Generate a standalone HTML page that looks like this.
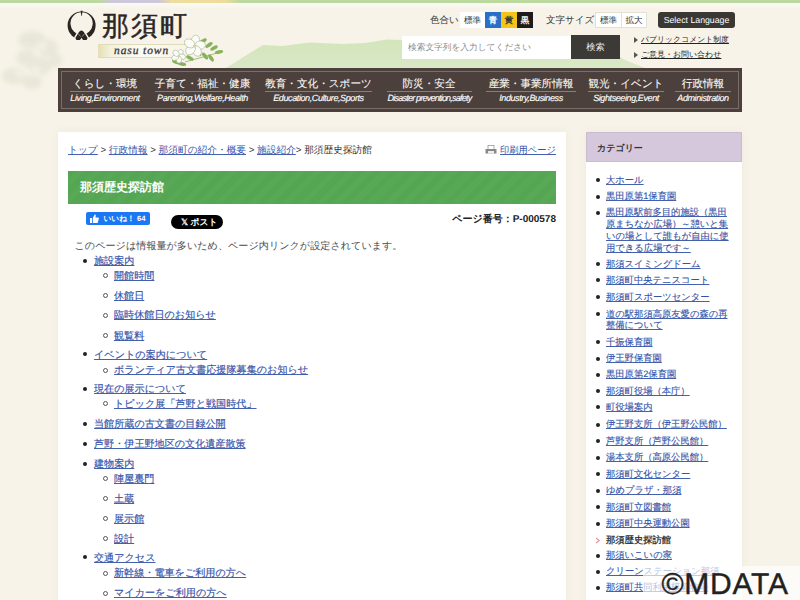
<!DOCTYPE html>
<html lang="ja"><head><meta charset="utf-8">
<style>
*{margin:0;padding:0;box-sizing:border-box}
html,body{width:800px;height:600px;overflow:hidden}
body{text-rendering:geometricPrecision;background:#f7f3e8;font-family:"Liberation Sans",sans-serif;color:#333;position:relative}
.a{position:absolute;white-space:nowrap}
a{color:#3452a8;text-decoration:underline;text-decoration-color:#4560ae}
#stripe{left:0;top:0;width:800px;height:3px;background:linear-gradient(90deg,#bcd9a0 0,#bcd9a0 98px,#cdc8dc 112px,#cdc8dc 158px,#eedd9e 172px,#efdc9c 225px,#bcd9a0 240px,#bcd9a0 800px)}
#stripe2{left:0;top:3px;width:800px;height:6px;background:linear-gradient(180deg,rgba(255,255,255,0.6),rgba(255,255,255,0))}
.btn{position:absolute;height:16px;font-size:8.5px;line-height:16px;text-align:center}
#nav{left:58px;top:68px;width:684px;height:44px;background:#4b403b}
#nav .in{position:absolute;left:3px;top:3px;right:3px;bottom:3px;border:1px solid #7a6f68}
.ni{position:absolute;top:0;height:44px;text-align:center;color:#f2efe8}
.ni .j{position:absolute;left:-10px;right:-10px;top:9.5px;font-size:10.6px;color:#fbf9f4;-webkit-text-stroke:0.1px #fbf9f4;line-height:13px;font-family:"Liberation Serif",serif}
.ni .u{position:absolute;top:23px;height:1px;background:#8a7f78;left:0;right:0}
.ni .e{position:absolute;left:-10px;right:-10px;top:25px;font-size:9px;line-height:10px;font-style:italic;letter-spacing:-0.4px;color:#fff;-webkit-text-stroke:0.15px #fff}
#main{left:58px;top:132px;width:508px;height:468px;background:#fff;box-shadow:0 0 9px rgba(90,90,60,0.06)}
#side{left:586px;top:132px;width:156px;height:468px;background:#fff;box-shadow:0 0 9px rgba(90,90,60,0.06)}
#sideh{left:586px;top:132px;width:156px;height:30px;background:#d5c7dc;border:1px solid #cbbcd1}
.t{position:absolute;white-space:nowrap;font-size:10.1px;line-height:15px;-webkit-text-stroke:0.15px #3452a8}
.dot{position:absolute;width:4px;height:4px;border-radius:50%;background:#222}
.cir{position:absolute;width:5px;height:5px;border-radius:50%;border:1px solid #555}
.s{position:absolute;white-space:nowrap;font-size:9.3px;line-height:11.8px;-webkit-text-stroke:0.12px #3452a8}
</style></head><body>
<div class="a" id="stripe"></div><div class="a" id="stripe2"></div>
<svg class="a" style="left:0;top:0" width="120" height="120" viewBox="0 0 120 120">
<defs><filter id="bl" x="-50%" y="-50%" width="200%" height="200%"><feGaussianBlur stdDeviation="2.5"/></filter></defs>
<g fill="#e6e4d6" filter="url(#bl)" opacity="0.8">
<ellipse cx="32" cy="40" rx="14" ry="9"/><ellipse cx="48" cy="48" rx="10" ry="9"/><ellipse cx="26" cy="58" rx="10" ry="8"/>
<ellipse cx="40" cy="66" rx="12" ry="9"/><ellipse cx="14" cy="76" rx="12" ry="8"/><ellipse cx="32" cy="82" rx="10" ry="7"/><ellipse cx="56" cy="60" rx="6" ry="7"/>
</g>
<g fill="#f8f7f0" filter="url(#bl)" opacity="0.7"><ellipse cx="42" cy="46" rx="5" ry="4"/><ellipse cx="20" cy="74" rx="5" ry="3"/><ellipse cx="36" cy="70" rx="4" ry="4"/></g>
</svg>
<svg class="a" style="left:0;top:0" width="800" height="70" viewBox="0 0 800 70">
<defs><linearGradient id="mg" x1="0" y1="0" x2="0" y2="1"><stop offset="0" stop-color="#d2e5ba"/><stop offset="1" stop-color="#d9e8c6"/></linearGradient></defs>
<path d="M226 68 L245 56 L263 45 L282 46 L310 42.5 L343 44 L365 43 L387 39.5 L402 40 L570 38 L600 45 L625 60 L645 68 Z" fill="url(#mg)"/>
</svg>
<svg class="a" style="left:64px;top:8px" width="36" height="36" viewBox="0 0 36 36">
<defs><mask id="lm"><rect width="36" height="36" fill="#fff"/><circle cx="17.6" cy="15.3" r="11.1" fill="#000"/><path d="M17.4 20.8 L22 24.6 L25.2 30 L25.2 36 L9.8 36 L9.8 30 L12.8 24.6 Z" fill="#000"/></mask></defs>
<circle cx="17.6" cy="17.5" r="14" fill="#2a2422" mask="url(#lm)"/>
<path d="M16.6 2.8 L18.6 2.8 L17.8 8 L17.4 8 Z" fill="#2a2422"/>
<path d="M17.4 22.6 C18.5 22.6 19.6 23.6 20.6 25.2 L23.6 30 L22.6 32 L19 32 L17.5 29.8 L16 32 L12.4 32 L11.4 30 L14.2 25.2 C15.2 23.6 16.3 22.6 17.4 22.6 Z" fill="#2a2422"/>
<path d="M14.2 25.6 L16.6 28.6 M20.6 25.6 L18.2 28.6" stroke="#e8e4d8" stroke-width="0.5"/>
</svg>
<div class="a" style="left:102px;top:10px;font-size:27px;line-height:32px;color:#2b2523;font-family:'Liberation Serif',serif;letter-spacing:2px;-webkit-text-stroke:0.5px #2b2523">那須町</div>
<div class="a" style="left:98px;top:44px;width:92px;height:14px;background:linear-gradient(90deg,#e4dfb5 0,#f3f0dc 12px,#fbfaf3 40px,#f8f6ea 80px,rgba(246,242,230,0) 92px);border-top:1px solid #e0dcb8;border-bottom:1px solid #e0dcb8"></div>
<div class="a" style="left:114px;top:44px;font-size:11.5px;line-height:14px;font-style:italic;font-family:'Liberation Serif',serif;color:#3a3836;letter-spacing:0.9px;-webkit-text-stroke:0.3px #3a3836">nasu town</div>
<svg class="a" style="left:0;top:0" width="240" height="70" viewBox="0 0 240 70">
<g fill="#86b35a"><ellipse cx="203" cy="41" rx="4.2" ry="1.8" transform="rotate(-30 203 41)"/><ellipse cx="209" cy="45" rx="4.2" ry="1.8" transform="rotate(-35 209 45)"/><ellipse cx="214" cy="48" rx="4.2" ry="1.8" transform="rotate(-30 214 48)"/><ellipse cx="219" cy="52" rx="4.2" ry="1.8" transform="rotate(-10 219 52)"/><ellipse cx="198" cy="53" rx="4.2" ry="1.8" transform="rotate(40 198 53)"/><ellipse cx="205" cy="56" rx="4.2" ry="1.8" transform="rotate(50 205 56)"/><ellipse cx="211" cy="58" rx="4.2" ry="1.8" transform="rotate(55 211 58)"/><ellipse cx="190" cy="58" rx="4.2" ry="1.8" transform="rotate(30 190 58)"/><ellipse cx="176" cy="62" rx="4.2" ry="1.8" transform="rotate(20 176 62)"/><ellipse cx="182" cy="64" rx="4.2" ry="1.8" transform="rotate(10 182 64)"/><path d="M185 62 L221 52" stroke="#86b35a" stroke-width="0.8"/></g>
<g fill="#fbfcf6" stroke="#9aa88c" stroke-width="0.5"><ellipse cx="195.46" cy="40.58" rx="5.50" ry="4.20" transform="rotate(-80.0 195.46 40.58)"/><ellipse cx="199.95" cy="45.23" rx="5.50" ry="4.20" transform="rotate(-8.0 199.95 45.23)"/><ellipse cx="196.91" cy="50.94" rx="5.50" ry="4.20" transform="rotate(64.0 196.91 50.94)"/><ellipse cx="190.54" cy="49.82" rx="5.50" ry="4.20" transform="rotate(136.0 190.54 49.82)"/><ellipse cx="189.64" cy="43.42" rx="5.50" ry="4.20" transform="rotate(208.0 189.64 43.42)"/></g>
<g fill="#fbfcf6" stroke="#9aa88c" stroke-width="0.5"><ellipse cx="180.29" cy="52.90" rx="3.58" ry="2.73" transform="rotate(-60.0 180.29 52.90)"/><ellipse cx="182.00" cy="56.74" rx="3.58" ry="2.73" transform="rotate(12.0 182.00 56.74)"/><ellipse cx="178.87" cy="59.56" rx="3.58" ry="2.73" transform="rotate(84.0 178.87 59.56)"/><ellipse cx="175.23" cy="57.45" rx="3.58" ry="2.73" transform="rotate(156.0 175.23 57.45)"/><ellipse cx="176.11" cy="53.34" rx="3.58" ry="2.73" transform="rotate(228.0 176.11 53.34)"/></g>
<circle cx="194.5" cy="46" r="1.6" fill="#cfd89a"/><circle cx="178.5" cy="56" r="1.1" fill="#cfd89a"/>
</svg>

<div class="a" style="left:430px;top:15px;font-size:9.5px;line-height:12px;color:#333">色合い</div>
<div class="btn" style="left:460px;top:12px;width:25px;background:#fff;color:#333">標準</div>
<div class="btn" style="left:485px;top:12px;width:16px;background:#2a6fc7;color:#fff;font-weight:bold">青</div>
<div class="btn" style="left:501px;top:12px;width:16px;background:#f4c418;color:#333;font-weight:bold">黄</div>
<div class="btn" style="left:517px;top:12px;width:16px;background:#1c1c1c;color:#fff;font-weight:bold">黒</div>
<div class="a" style="left:546px;top:15px;font-size:9.5px;line-height:12px;color:#333">文字サイズ</div>
<div class="btn" style="left:595px;top:12px;width:27px;background:#fff;color:#333;border:1px solid #e3e0d8;line-height:14px">標準</div>
<div class="btn" style="left:621px;top:12px;width:26px;background:#fff;color:#333;border:1px solid #e3e0d8;line-height:14px">拡大</div>
<div class="btn" style="left:658px;top:12px;width:77px;background:#3b3733;color:#fff;border-radius:3px;font-size:8.75px;line-height:17px">Select Language</div>

<div class="a" style="left:402px;top:36px;width:169px;height:23px;background:#fff"></div>
<div class="a" style="left:408px;top:41px;font-size:8.7px;line-height:12px;color:#8a8a8a">検索文字列を入力してください</div>
<div class="a" style="left:571px;top:35px;width:49px;height:24px;background:#3c3a37;color:#f4f4f4;font-size:9.2px;line-height:24px;text-align:center">検索</div>
<div class="a" style="left:634px;top:37px;width:0;height:0;border-left:4px solid #555;border-top:3px solid transparent;border-bottom:3px solid transparent"></div>
<div class="a" style="left:641px;top:34px;font-size:7.85px;line-height:11px;color:#222;text-decoration:underline">パブリックコメント制度</div>
<div class="a" style="left:634px;top:52px;width:0;height:0;border-left:4px solid #555;border-top:3px solid transparent;border-bottom:3px solid transparent"></div>
<div class="a" style="left:641px;top:49px;font-size:7.95px;line-height:11px;color:#222;text-decoration:underline">ご意見・お問い合わせ</div>

<div class="a" id="nav"><div class="in"></div>
<div class="ni" style="left:12px;width:70px"><div class="j">くらし・環境</div><div class="u"></div><div class="e">Living,Environment</div></div>
<div class="ni" style="left:97px;width:95px"><div class="j">子育て・福祉・健康</div><div class="u"></div><div class="e">Parenting,Welfare,Health</div></div>
<div class="ni" style="left:207px;width:107px"><div class="j">教育・文化・スポーツ</div><div class="u"></div><div class="e">Education,Culture,Sports</div></div>
<div class="ni" style="left:329px;width:85px"><div class="j" style="left:-11px">防災・安全</div><div class="u"></div><div class="e" style="letter-spacing:-0.78px">Disaster prevention,safety</div></div>
<div class="ni" style="left:428px;width:90px"><div class="j">産業・事業所情報</div><div class="u"></div><div class="e">Industry,Business</div></div>
<div class="ni" style="left:530px;width:76px"><div class="j">観光・イベント</div><div class="u"></div><div class="e">Sightseeing,Event</div></div>
<div class="ni" style="left:617px;width:56px"><div class="j">行政情報</div><div class="u"></div><div class="e">Administration</div></div>
</div>

<div class="a" id="main"></div>
<div class="a" id="side"></div>
<div class="a" id="sideh"></div>

<div class="a" style="left:68px;top:143.5px;font-size:9.7px;line-height:14px;color:#333"><a>トップ</a> &gt; <a>行政情報</a> &gt; <a>那須町の紹介・概要</a> &gt; <a>施設紹介</a>&gt; 那須歴史探訪館</div>
<svg class="a" style="left:485px;top:145px" width="12" height="9" viewBox="0 0 12 9"><rect x="3" y="0.5" width="6" height="4" fill="#fff" stroke="#999" stroke-width="0.8"/><rect x="0.5" y="4" width="11" height="4.5" fill="#888"/><rect x="3" y="6" width="6" height="2.5" fill="#eee"/></svg>
<div class="a" style="left:500px;top:143px;font-size:9.25px;line-height:14px"><a>印刷用ページ</a></div>
<div class="a" style="left:68px;top:171px;width:488px;height:33px;background:#55a653;background-image:repeating-linear-gradient(135deg,rgba(255,255,255,0) 0,rgba(255,255,255,0) 6px,rgba(255,255,255,0.025) 6px,rgba(255,255,255,0.025) 12px)"></div>
<div class="a" style="left:80px;top:180px;font-size:12px;line-height:14px;font-weight:bold;color:#fff">那須歴史探訪館</div>
<div class="a" style="left:86px;top:212px;width:64px;height:13px;background:#1b77f2;border-radius:2px"></div>
<svg class="a" style="left:90px;top:214px" width="9" height="9" viewBox="0 0 9 9"><path d="M0 4 H2 V9 H0 Z M2.8 4 L4.8 0.5 C5.6 0.5 6 1 5.8 2 L5.4 3.5 H8 C8.8 3.5 9 4.2 8.8 4.8 L7.8 8.5 C7.6 9 7.3 9 6.8 9 H2.8 Z" fill="#fff"/></svg>
<div class="a" style="left:103.5px;top:213px;font-size:7.7px;line-height:11px;color:#fff;font-weight:bold">いいね！ 64</div>
<div class="a" style="left:171px;top:215px;width:52px;height:14px;background:#000;border-radius:7px"></div>
<div class="a" style="left:181px;top:216px;font-size:8.8px;line-height:12px;color:#fff;font-weight:bold">𝕏 ポスト</div>
<div class="a" style="left:452px;top:213px;width:104px;text-align:right;font-size:10px;line-height:13px;font-weight:bold;color:#222">ページ番号：P-000578</div>
<div class="a" style="left:74.5px;top:238.5px;font-size:10.1px;line-height:15px;color:#4a4a4a">このページは情報量が多いため、ページ内リンクが設定されています。</div>
<div class="dot" style="left:83px;top:258.6px"></div><div class="t" style="left:94px;top:253.8px"><a>施設案内</a></div><div class="cir" style="left:102.5px;top:273.1px"></div><div class="t" style="left:114px;top:268.8px"><a>開館時間</a></div><div class="cir" style="left:102.5px;top:293.0px"></div><div class="t" style="left:114px;top:288.7px"><a>休館日</a></div><div class="cir" style="left:102.5px;top:312.5px"></div><div class="t" style="left:114px;top:308.2px"><a>臨時休館日のお知らせ</a></div><div class="cir" style="left:102.5px;top:333.1px"></div><div class="t" style="left:114px;top:328.8px"><a>観覧料</a></div><div class="dot" style="left:83px;top:352.4px"></div><div class="t" style="left:94px;top:347.6px"><a>イベントの案内について</a></div><div class="cir" style="left:102.5px;top:367.5px"></div><div class="t" style="left:114px;top:363.2px"><a>ボランティア古文書応援隊募集のお知らせ</a></div><div class="dot" style="left:83px;top:386.9px"></div><div class="t" style="left:94px;top:382.1px"><a>現在の展示について</a></div><div class="cir" style="left:102.5px;top:401.4px"></div><div class="t" style="left:114px;top:397.1px"><a>トピック展「芦野と戦国時代」</a></div><div class="dot" style="left:83px;top:422.2px"></div><div class="t" style="left:94px;top:417.4px"><a>当館所蔵の古文書の目録公開</a></div><div class="dot" style="left:83px;top:441.7px"></div><div class="t" style="left:94px;top:436.9px"><a>芦野・伊王野地区の文化遺産散策</a></div><div class="dot" style="left:83px;top:461.6px"></div><div class="t" style="left:94px;top:456.8px"><a>建物案内</a></div><div class="cir" style="left:102.5px;top:476.1px"></div><div class="t" style="left:114px;top:471.8px"><a>陣屋裏門</a></div><div class="cir" style="left:102.5px;top:496.4px"></div><div class="t" style="left:114px;top:492.1px"><a>土蔵</a></div><div class="cir" style="left:102.5px;top:516.2px"></div><div class="t" style="left:114px;top:511.9px"><a>展示館</a></div><div class="cir" style="left:102.5px;top:536.1px"></div><div class="t" style="left:114px;top:531.8px"><a>設計</a></div><div class="dot" style="left:83px;top:555.4px"></div><div class="t" style="left:94px;top:550.6px"><a>交通アクセス</a></div><div class="cir" style="left:102.5px;top:570.6px"></div><div class="t" style="left:114px;top:566.3px"><a>新幹線・電車をご利用の方へ</a></div><div class="cir" style="left:102.5px;top:590.5px"></div><div class="t" style="left:114px;top:586.2px"><a>マイカーをご利用の方へ</a></div>
<div class="a" style="left:597px;top:140.5px;font-size:9px;line-height:14px;font-weight:bold;color:#333">カテゴリー</div>
<div class="dot" style="left:596px;top:178.3px;width:4px;height:4px"></div><div class="s" style="left:606px;top:175.1px"><a>大ホール</a></div><div class="dot" style="left:596px;top:194.5px;width:4px;height:4px"></div><div class="s" style="left:606px;top:191.3px"><a>黒田原第1保育園</a></div><div class="dot" style="left:596px;top:210.5px;width:4px;height:4px"></div><div class="s" style="left:606px;top:207.3px"><a>黒田原駅前多目的施設（黒田<br>原まちなか広場）～憩いと集<br>いの場として誰もが自由に使<br>用できる広場です～</a></div><div class="dot" style="left:596px;top:262.2px;width:4px;height:4px"></div><div class="s" style="left:606px;top:259.0px"><a>那須スイミングドーム</a></div><div class="dot" style="left:596px;top:278.3px;width:4px;height:4px"></div><div class="s" style="left:606px;top:275.1px"><a>那須町中央テニスコート</a></div><div class="dot" style="left:596px;top:294.7px;width:4px;height:4px"></div><div class="s" style="left:606px;top:291.5px"><a>那須町スポーツセンター</a></div><div class="dot" style="left:596px;top:311.7px;width:4px;height:4px"></div><div class="s" style="left:606px;top:308.5px"><a>道の駅那須高原友愛の森の再<br>整備について</a></div><div class="dot" style="left:596px;top:340.0px;width:4px;height:4px"></div><div class="s" style="left:606px;top:336.8px"><a>千振保育園</a></div><div class="dot" style="left:596px;top:356.5px;width:4px;height:4px"></div><div class="s" style="left:606px;top:353.3px"><a>伊王野保育園</a></div><div class="dot" style="left:596px;top:372.6px;width:4px;height:4px"></div><div class="s" style="left:606px;top:369.4px"><a>黒田原第2保育園</a></div><div class="dot" style="left:596px;top:388.8px;width:4px;height:4px"></div><div class="s" style="left:606px;top:385.6px"><a>那須町役場（本庁）</a></div><div class="dot" style="left:596px;top:405.2px;width:4px;height:4px"></div><div class="s" style="left:606px;top:402.0px"><a>町役場案内</a></div><div class="dot" style="left:596px;top:422.5px;width:4px;height:4px"></div><div class="s" style="left:606px;top:419.3px"><a>伊王野支所（伊王野公民館）</a></div><div class="dot" style="left:596px;top:439.0px;width:4px;height:4px"></div><div class="s" style="left:606px;top:435.8px"><a>芦野支所（芦野公民館）</a></div><div class="dot" style="left:596px;top:455.5px;width:4px;height:4px"></div><div class="s" style="left:606px;top:452.3px"><a>湯本支所（高原公民館）</a></div><div class="dot" style="left:596px;top:472.0px;width:4px;height:4px"></div><div class="s" style="left:606px;top:468.8px"><a>那須町文化センター</a></div><div class="dot" style="left:596px;top:488.5px;width:4px;height:4px"></div><div class="s" style="left:606px;top:485.3px"><a>ゆめプラザ・那須</a></div><div class="dot" style="left:596px;top:505.0px;width:4px;height:4px"></div><div class="s" style="left:606px;top:501.8px"><a>那須町立図書館</a></div><div class="dot" style="left:596px;top:521.5px;width:4px;height:4px"></div><div class="s" style="left:606px;top:518.3px"><a>那須町中央運動公園</a></div><svg class="a" style="left:595px;top:536.5px" width="6" height="7" viewBox="0 0 6 7"><path d="M1 0.8 L4.2 3.5 L1 6.2" fill="none" stroke="#e58896" stroke-width="1.1"/></svg><div class="s" style="left:606px;top:534.8px;color:#2e2e2e;-webkit-text-stroke:0.3px #2e2e2e">那須歴史探訪館</div><div class="dot" style="left:596px;top:553.5px;width:4px;height:4px"></div><div class="s" style="left:606px;top:550.3px"><a>那須いこいの家</a></div><div class="dot" style="left:596px;top:569.5px;width:4px;height:4px"></div><div class="s" style="left:606px;top:566.3px"><a>クリーンステーション那須</a></div><div class="dot" style="left:596px;top:585.5px;width:4px;height:4px"></div><div class="s" style="left:606px;top:582.3px"><a>那須町共同利用模範牧場</a></div>
<div class="a" style="left:643px;top:566px;width:157px;height:34px;background:rgba(255,255,255,0.68)"></div>
<div class="a" style="left:661.5px;top:567.5px;font-size:30px;line-height:34px;color:#222;letter-spacing:0.75px;-webkit-text-stroke:0.4px #222">©MDATA</div>
</body></html>
